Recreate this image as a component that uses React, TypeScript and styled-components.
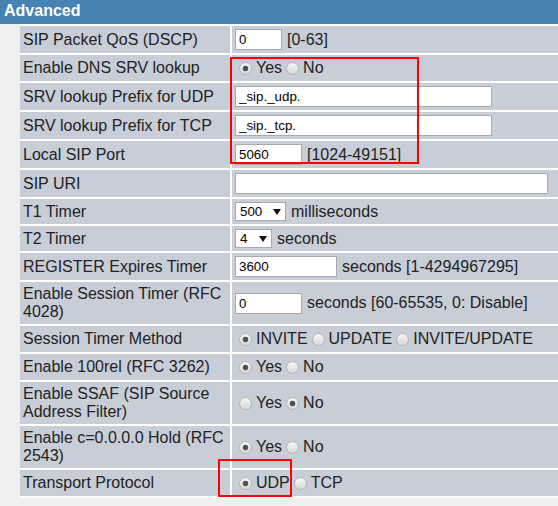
import React from "react";
import styled, { createGlobalStyle } from "styled-components";

const GlobalStyle = createGlobalStyle`
  html, body {
    margin: 0;
    padding: 0;
    background: #efefef;
  }
  body {
    font-family: "Liberation Sans", Arial, sans-serif;
    font-size: 16px;
    color: #222;
  }
`;

const App = () => {
  return (
    <Page>
      <GlobalStyle />
      <Header>Advanced</Header>
      <Table>
        <Label>SIP Packet QoS (DSCP)</Label>
        <Value>
          <TextInput $w={47} defaultValue="0" />
          <Suffix>[0-63]</Suffix>
        </Value>

        <Label>Enable DNS SRV lookup</Label>
        <Value>
          <Choice name="dnssrv" text="Yes" checked />
          <Choice name="dnssrv" text="No" />
        </Value>

        <Label>SRV lookup Prefix for UDP</Label>
        <Value>
          <TextInput $w={257} defaultValue="_sip._udp." />
        </Value>

        <Label>SRV lookup Prefix for TCP</Label>
        <Value>
          <TextInput $w={257} defaultValue="_sip._tcp." />
        </Value>

        <Label>Local SIP Port</Label>
        <Value>
          <TextInput $w={67} defaultValue="5060" />
          <Suffix>[1024-49151]</Suffix>
        </Value>

        <Label>SIP URI</Label>
        <Value>
          <TextInput $w={313} defaultValue="" />
        </Value>

        <Label>T1 Timer</Label>
        <Value>
          <Dropdown width={51} value="500" options={["500", "1000", "2000"]} />
          <Suffix>milliseconds</Suffix>
        </Value>

        <Label>T2 Timer</Label>
        <Value>
          <Dropdown width={37} value="4" options={["4", "8"]} />
          <Suffix>seconds</Suffix>
        </Value>

        <Label>REGISTER Expires Timer</Label>
        <Value>
          <TextInput $w={102} defaultValue="3600" />
          <Suffix>seconds [1-4294967295]</Suffix>
        </Value>

        <Label>Enable Session Timer (RFC 4028)</Label>
        <Value>
          <TextInput $w={67} defaultValue="0" />
          <Suffix>seconds [60-65535, 0: Disable]</Suffix>
        </Value>

        <Label>Session Timer Method</Label>
        <Value>
          <Choice name="stm" text="INVITE" checked />
          <Choice name="stm" text="UPDATE" />
          <Choice name="stm" text="INVITE/UPDATE" />
        </Value>

        <Label>Enable 100rel (RFC 3262)</Label>
        <Value>
          <Choice name="rel" text="Yes" checked />
          <Choice name="rel" text="No" />
        </Value>

        <Label>Enable SSAF (SIP Source Address Filter)</Label>
        <Value>
          <Choice name="ssaf" text="Yes" />
          <Choice name="ssaf" text="No" checked />
        </Value>

        <Label>Enable c=0.0.0.0 Hold (RFC 2543)</Label>
        <Value>
          <Choice name="hold" text="Yes" checked />
          <Choice name="hold" text="No" />
        </Value>

        <Label>Transport Protocol</Label>
        <Value>
          <Choice name="tp" text="UDP" checked />
          <Choice name="tp" text="TCP" />
        </Value>
      </Table>

      {/* red annotation boxes drawn over the form */}
      <Highlight $left={230} $top={57} $w={189} $h={107} />
      <Highlight $left={218} $top={459} $w={74} $h={38} />
    </Page>
  );
};

const Choice = ({ name, text, checked }: { name: string; text: string; checked?: boolean }) => (
  <ChoiceLabel>
    <Radio type="radio" name={name} defaultChecked={checked} />
    {text}
  </ChoiceLabel>
);

const Dropdown = ({ width, value, options }: { width: number; value: string; options: string[] }) => (
  <SelectWrap>
    <Select $w={width} defaultValue={value}>
      {options.map((o) => (
        <option key={o}>{o}</option>
      ))}
    </Select>
    <Arrow />
  </SelectWrap>
);

const Page = styled.div`
  position: relative;
  width: 100%;
  min-height: 506px;
  overflow: hidden;
`;

const Header = styled.div`
  height: 24px;
  background: #4682b4;
  color: #fff;
  font-weight: bold;
  font-size: 16px;
  line-height: 22px;
  padding-left: 4px;
`;

const Table = styled.div`
  display: grid;
  grid-template-columns: 210px 1fr;
  gap: 2px;
  margin-left: 20px;
  padding-top: 2px;
  padding-bottom: 2px;
  background: #fff;
`;

const Cell = styled.div`
  display: flex;
  align-items: center;
  min-height: 25px;
  box-sizing: border-box;
  padding: 3px;
  background: #c8ced8;
  line-height: 18px;
`;

const Label = styled(Cell)``;

const Value = styled(Cell)`
  white-space: nowrap;
`;

const TextInput = styled.input<{ $w: number }>`
  box-sizing: border-box;
  width: ${(p) => p.$w}px;
  height: 21px;
  margin: 0;
  padding: 1px 3px;
  border: 1px solid #a9a9a9;
  background: #fff;
  font-family: "Liberation Sans", Arial, sans-serif;
  font-size: 13.33px;
  color: #000;
  outline: none;
`;

const Suffix = styled.span`
  margin-left: 5px;
`;

const SelectWrap = styled.span`
  position: relative;
  display: inline-flex;
`;

const Select = styled.select<{ $w: number }>`
  appearance: none;
  box-sizing: border-box;
  width: ${(p) => p.$w}px;
  height: 19px;
  margin: 0;
  padding: 0 0 0 4px;
  border: 1px solid #a9a9a9;
  border-radius: 0;
  background: #fff;
  font-family: "Liberation Sans", Arial, sans-serif;
  font-size: 13.33px;
  color: #000;
  outline: none;
`;

const Arrow = styled.span`
  position: absolute;
  right: 5px;
  top: 7px;
  width: 0;
  height: 0;
  border-left: 4px solid transparent;
  border-right: 4px solid transparent;
  border-top: 6px solid #111;
  pointer-events: none;
`;

const ChoiceLabel = styled.label`
  display: inline-flex;
  align-items: center;
  line-height: 20px;
`;

const Radio = styled.input`
  appearance: none;
  box-sizing: border-box;
  width: 13px;
  height: 13px;
  margin: 0 4px;
  border: 1px solid #b4b4b4;
  border-radius: 50%;
  background: linear-gradient(#f6f6f6, #d9d9d9);

  &:checked {
    background: radial-gradient(circle, #505050 0, #505050 2.4px, transparent 3.2px),
      linear-gradient(#f6f6f6, #d9d9d9);
  }
`;

const Highlight = styled.div<{ $left: number; $top: number; $w: number; $h: number }>`
  position: absolute;
  left: ${(p) => p.$left}px;
  top: ${(p) => p.$top}px;
  width: ${(p) => p.$w}px;
  height: ${(p) => p.$h}px;
  box-sizing: border-box;
  border: 2px solid #f00;
  pointer-events: none;
`;

export default App;
